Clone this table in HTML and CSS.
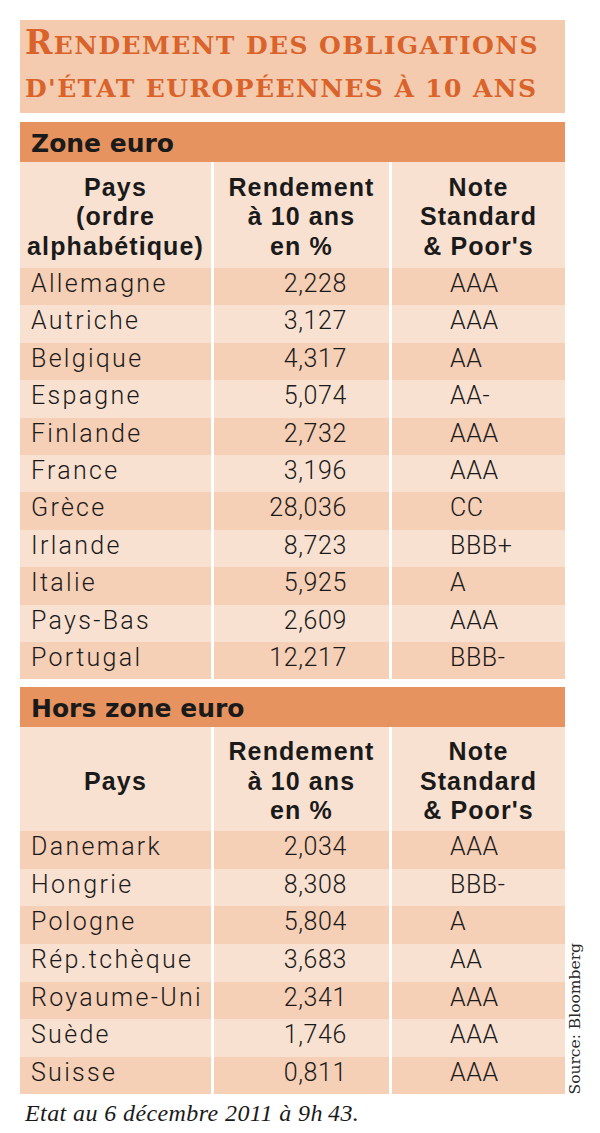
FILE: index.html
```html
<!DOCTYPE html>
<html lang="fr">
<head>
<meta charset="utf-8">
<title>Rendement des obligations d'état européennes à 10 ans</title>
<link rel="stylesheet" href="styles.css">
</head>
<body>
<main class="sheet">
  <header class="title-box">
    <h1 class="title"><span class="title-initial">R</span>endement des obligations<br>d'état européennes à 10 ans</h1>
  </header>

  <section class="zone zone-euro">
    <h2 class="zone-bar">Zone euro</h2>
    <div class="grid-table">
      <div class="row head">
        <div class="cell">Pays<br>(ordre<br>alphabétique)</div>
        <div class="cell">Rendement<br>à 10 ans<br>en %</div>
        <div class="cell">Note<br>Standard<br>&amp; Poor's</div>
      </div>
      <div class="row dark"><div class="cell country">Allemagne</div><div class="cell num">2,228</div><div class="cell rating">AAA</div></div>
      <div class="row"><div class="cell country">Autriche</div><div class="cell num">3,127</div><div class="cell rating">AAA</div></div>
      <div class="row dark"><div class="cell country">Belgique</div><div class="cell num">4,317</div><div class="cell rating">AA</div></div>
      <div class="row"><div class="cell country">Espagne</div><div class="cell num">5,074</div><div class="cell rating">AA-</div></div>
      <div class="row dark"><div class="cell country">Finlande</div><div class="cell num">2,732</div><div class="cell rating">AAA</div></div>
      <div class="row"><div class="cell country">France</div><div class="cell num">3,196</div><div class="cell rating">AAA</div></div>
      <div class="row dark"><div class="cell country">Grèce</div><div class="cell num">28,036</div><div class="cell rating">CC</div></div>
      <div class="row"><div class="cell country">Irlande</div><div class="cell num">8,723</div><div class="cell rating">BBB+</div></div>
      <div class="row dark"><div class="cell country">Italie</div><div class="cell num">5,925</div><div class="cell rating">A</div></div>
      <div class="row"><div class="cell country">Pays-Bas</div><div class="cell num">2,609</div><div class="cell rating">AAA</div></div>
      <div class="row dark"><div class="cell country">Portugal</div><div class="cell num">12,217</div><div class="cell rating">BBB-</div></div>
    </div>
  </section>

  <div class="hors-wrap">
    <section class="zone zone-hors">
      <h2 class="zone-bar">Hors zone euro</h2>
      <div class="grid-table">
        <div class="row head">
          <div class="cell">Pays</div>
          <div class="cell">Rendement<br>à 10 ans<br>en %</div>
          <div class="cell">Note<br>Standard<br>&amp; Poor's</div>
        </div>
        <div class="row dark"><div class="cell country">Danemark</div><div class="cell num">2,034</div><div class="cell rating">AAA</div></div>
        <div class="row"><div class="cell country">Hongrie</div><div class="cell num">8,308</div><div class="cell rating">BBB-</div></div>
        <div class="row dark"><div class="cell country">Pologne</div><div class="cell num">5,804</div><div class="cell rating">A</div></div>
        <div class="row"><div class="cell country">Rép.tchèque</div><div class="cell num">3,683</div><div class="cell rating">AA</div></div>
        <div class="row dark"><div class="cell country">Royaume-Uni</div><div class="cell num">2,341</div><div class="cell rating">AAA</div></div>
        <div class="row"><div class="cell country">Suède</div><div class="cell num">1,746</div><div class="cell rating">AAA</div></div>
        <div class="row dark"><div class="cell country">Suisse</div><div class="cell num">0,811</div><div class="cell rating">AAA</div></div>
      </div>
    </section>
    <p class="source">Source: Bloomberg</p>
  </div>

  <p class="footnote">Etat au 6 décembre 2011 à 9h&#8239;43.</p>
</main>
</body>
</html>
```

FILE: styles.css
```css
html, body {
  margin: 0;
  padding: 0;
  background: #ffffff;
}

.sheet {
  padding: 20px 0 0 20px;
  color: #1b1a1a;
}

/* Title */
.title-box {
  width: 545px;
  height: 93px;
  box-sizing: border-box;
  background: #f4cbae;
  padding: 4px 0 0 5px;
}

.title {
  margin: 0;
  font-family: "DejaVu Serif", "Liberation Serif", serif;
  font-weight: bold;
  font-size: 25px;
  line-height: 43px;
  letter-spacing: 1.4px;
  text-transform: uppercase;
  color: #d9632a;
  white-space: nowrap;
}

.title-initial {
  font-size: 33px;
  line-height: 1;
}

/* Sections */
.zone {
  width: 545px;
}

.zone-bar {
  margin: 9px 0 0 0;
  height: 40px;
  box-sizing: border-box;
  padding: 3px 0 0 11px;
  background: #e6935f;
  font-family: "DejaVu Sans", "Liberation Sans", sans-serif;
  font-weight: bold;
  font-size: 25px;
  line-height: 37px;
  color: #1b1a1a;
}

.zone-hors .zone-bar {
  margin-top: 8px;
}

.grid-table {
  display: flex;
  flex-direction: column;
}

.row {
  display: grid;
  grid-template-columns: 191px 175px 173px;
  column-gap: 3px;
  height: 37.4px;
}

.zone-hors .row {
  height: 37.6px;
}

.cell {
  background: #f9e1d1;
  box-sizing: border-box;
  font-family: Roboto, "Liberation Sans", sans-serif;
  font-weight: 300;
  font-size: 25px;
  line-height: 31px;
  padding-bottom: 6px;
  white-space: nowrap;
  font-variant-numeric: tabular-nums;
}

.row.dark .cell {
  background: #f5cfb6;
}

.country {
  padding-left: 11px;
  letter-spacing: 2.3px;
}

.num {
  text-align: right;
  padding-right: 42px;
  letter-spacing: 0.6px;
}

.rating {
  padding-left: 58px;
  letter-spacing: 0.6px;
}

/* Header rows */
.row.head {
  height: 106px;
}

.zone-hors .row.head {
  height: 104px;
}

.row.head .cell {
  display: flex;
  align-items: center;
  justify-content: center;
  text-align: center;
  padding: 4px 0 0 0;
  font-family: "Liberation Sans", Arial, sans-serif;
  font-weight: bold;
  font-size: 25px;
  line-height: 29.5px;
  letter-spacing: 1.1px;
  background: #f9e1d1;
}

/* Hors zone + source */
.hors-wrap {
  display: grid;
  grid-template-columns: 545px auto;
  align-items: end;
}

.source {
  margin: 0 0 0 2px;
  writing-mode: vertical-rl;
  transform: rotate(180deg);
  font-family: "DejaVu Serif", "Liberation Serif", serif;
  font-size: 15.5px;
  line-height: 17px;
  color: #2a2a2a;
  white-space: nowrap;
}

/* Footnote */
.footnote {
  margin: 6px 0 0 0;
  padding-left: 5px;
  font-family: "Liberation Serif", "Times New Roman", serif;
  font-style: italic;
  font-size: 24px;
  line-height: 26px;
  letter-spacing: 0.4px;
  color: #1b1a1a;
}
```
